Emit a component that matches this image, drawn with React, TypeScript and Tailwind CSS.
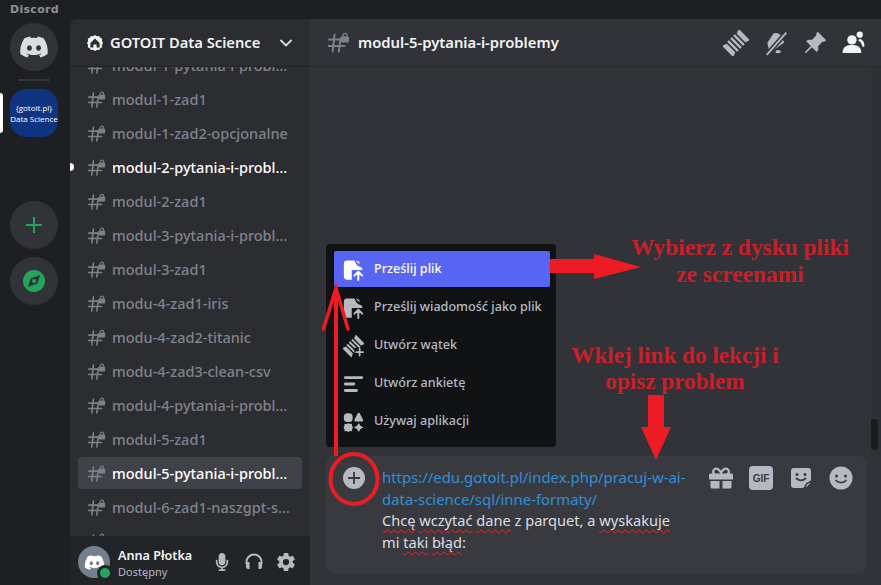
import { FaDiscord, FaGift, FaMicrophone } from "react-icons/fa";
import { IoSettingsSharp } from "react-icons/io5";
import { BsPinAngleFill } from "react-icons/bs";

const channels = [
    { name: "modul-1-pytania-i-problemy" },
    { name: "modul-1-zad1" },
    { name: "modul-1-zad2-opcjonalne" },
    { name: "modul-2-pytania-i-problemy", unread: true },
    { name: "modul-2-zad1" },
    { name: "modul-3-pytania-i-problemy" },
    { name: "modul-3-zad1" },
    { name: "modu-4-zad1-iris" },
    { name: "modu-4-zad2-titanic" },
    { name: "modu-4-zad3-clean-csv" },
    { name: "modul-4-pytania-i-problemy" },
    { name: "modul-5-zad1" },
    { name: "modul-5-pytania-i-problemy", active: true },
    { name: "modul-6-zad1-naszgpt-streamlit" },
    { name: "modul-6-zad2-pytania" },
];

const LockHash = ({ size = 22 }: { size?: number }) => (
    <svg width={size} height={size} viewBox="0 0 22 22" fill="none" className="shrink-0 text-[#7c8089]">
        <path
            d="M6.6 2.5 4.6 19.5M12.6 6.5 10.8 19.5M1 7.5h11M0.5 14h16"
            stroke="currentColor"
            strokeWidth="2"
            strokeLinecap="round"
        />
        <rect x="13" y="4.2" width="8" height="6.3" rx="1.2" fill="currentColor" />
        <path d="M15 4.6V3.4a2 2 0 0 1 4 0v1.2" stroke="currentColor" strokeWidth="1.4" />
    </svg>
);

const ThreadIcon = ({ plus, size = 24 }: { plus?: boolean; size?: number }) => (
    <svg width={size} height={size} viewBox="0 0 24 24" fill="currentColor">
        <g transform="rotate(45 12 12)">
            <path d="M4.5 1h15l-2 4.500h-11z" />
            <rect x="5.500" y="7" width="13" height="2.200" rx="0.500" />
            <rect x="5.500" y="10.900" width="13" height="2.200" rx="0.500" />
            <rect x="5.500" y="14.800" width="13" height="2.200" rx="0.500" />
            <path d="M6.500 18.500h11l2 4.500h-15z" />
        </g>
        {plus && (
            <>
                <rect x="13" y="14" width="11" height="10" fill="#111214" />
                <path d="M19 15v8M15 19h8" stroke="currentColor" strokeWidth="2" strokeLinecap="round" />
            </>
        )}
    </svg>
);

const UploadFileIcon = ({ bg }: { bg: string }) => (
    <svg width="24" height="24" viewBox="0 0 24 24" fill="currentColor">
        <path d="M4.5 1H13l9 9v9a4 4 0 0 1-4 4H4.5A3.5 3.5 0 0 1 1 19.5v-15A3.5 3.5 0 0 1 4.500 1z" />
        <path d="M14.500 1.500c.4 3.500 3 6 7 6.500" fill="none" stroke={bg} strokeWidth="1.600" />
        <path d="M15.500 1 22 1 22 7.500z" fill={bg} />
        <path d="M15 1.200c2.500.6 3.800 1.600 4.600 3.600-1.800-.3-3.800-1.400-4.600-3.600zM17 6.200l4.600 2.600" fill="currentColor" />
        <rect x="10" y="12" width="14" height="12" fill={bg} />
        <path
            d="M17.500 23.500v-9M13 18.500l4.500-4.500 4.500 4.500"
            fill="none"
            stroke="currentColor"
            strokeWidth="2.200"
            strokeLinecap="round"
            strokeLinejoin="round"
        />
    </svg>
);

const PollIcon = () => (
    <svg width="24" height="24" viewBox="0 0 24 24" fill="currentColor">
        <rect x="1" y="3" width="22" height="3.400" rx="1.700" />
        <rect x="1" y="10.400" width="13" height="3.400" rx="1.700" />
        <rect x="1" y="17.800" width="16" height="3.400" rx="1.700" />
    </svg>
);

const AppsIcon = () => (
    <svg width="24" height="24" viewBox="0 0 24 24" fill="currentColor">
        <rect x="1" y="2" width="10" height="10" rx="4" />
        <path d="M18 1.500c.6 0 1 .3 1.300.8l3.600 7c.5 1-.2 2.200-1.400 2.200h-7c-1.200 0-1.900-1.200-1.400-2.200l3.600-7c.3-.5.7-.8 1.300-.8z" />
        <path d="M6 13.300l2 1 2.200-.2.2 2.200 1 2-1 2-.2 2.200-2.200-.2-2 1-2-1-2.200.2-.2-2.200-1-2 1-2 .2-2.200 2.200.2z" />
        <path d="M18 13l2 3.300 3.500 1.900-3.500 1.900-2 3.400-2-3.400-3.500-1.900 3.500-1.900z" />
    </svg>
);

const MenuRow = ({ label, icon, active }: { label: string; icon: React.ReactNode; active?: boolean }) => (
    <div
        className={`flex h-9 items-center gap-[10px] whitespace-nowrap rounded-[2px] px-[9px] pt-[1px] text-[12.6px] font-medium ${
            active ? "bg-[#5865f2] text-white" : "text-[#b5bac1]"
        }`}
    >
        <span className="flex w-[21px] justify-center">{icon}</span>
        {label}
    </div>
);

const Squiggle = ({ children }: { children: React.ReactNode }) => (
    <span className="underline decoration-[#e8262d] decoration-wavy decoration-[1px] underline-offset-[3px] [text-decoration-skip-ink:none]">
        {children}
    </span>
);

const Annotations = () => (
    <svg width="881" height="585" viewBox="0 0 881 585" fill="none" className="pointer-events-none absolute left-0 top-0">
        <path d="M336 456V288" stroke="#ed1c24" strokeWidth="4" />
        <path d="M323.5 329 336 288l12 41" stroke="#ed1c24" strokeWidth="3.500" strokeLinecap="round" />
        <ellipse cx="354" cy="479" rx="23.500" ry="25" stroke="#ed1c24" strokeWidth="4" />
        <path d="M550 259h44v-5l47 13-47 12v-6h-44z" fill="#ed1c24" />
        <path d="M648 395h16v32h7l-15 33-15-33h7z" fill="#ed1c24" />
    </svg>
);

const App = () => {
    return (
        <div className="relative flex h-[585px] w-[881px] flex-col overflow-hidden bg-[#1e1f22] font-['Noto_Sans',sans-serif]">
            <div className="flex h-[19px] shrink-0 items-center pl-[10px] font-['DejaVu_Sans',sans-serif] text-[11px] font-bold leading-none tracking-[0.3px] text-[#8e9299]">
                Discord
            </div>
            <div className="flex min-h-0 flex-1">
                {/* serwery */}
                <div className="flex w-[70px] shrink-0 flex-col items-start pl-[10px] pt-1">
                    <div className="flex size-12 items-center justify-center rounded-full bg-[#313338] text-[#dbdee1]">
                        <FaDiscord size={30} />
                    </div>
                    <div className="ml-2 mt-2 h-[2px] w-8 rounded-sm bg-[#35363c]" />
                    <div className="relative mt-2 h-12">
                        <div className="absolute -left-[10px] top-1 h-10 w-[3px] rounded-r bg-white" />
                        <div className="flex size-12 flex-col items-center justify-center rounded-2xl bg-[#0f3480] text-center font-['Open_Sans',sans-serif] text-[8px] leading-[11px] text-white">
                            <span>{"{gotoit.pl}"}</span>
                            <span>Data Science</span>
                        </div>
                    </div>
                    <div className="mt-16 flex size-12 items-center justify-center rounded-full bg-[#313338] text-[#23a559]">
                        <svg width="18" height="18" viewBox="0 0 18 18" fill="none">
                            <path d="M9 1v16M1 9h16" stroke="currentColor" strokeWidth="2" />
                        </svg>
                    </div>
                    <div className="mt-2 flex size-12 items-center justify-center rounded-full bg-[#313338]">
                        <svg width="24" height="24" viewBox="0 0 24 24">
                            <circle cx="12" cy="12" r="11" fill="#23a559" />
                            <path d="M18 6 15.500 14.500 6 18 8.500 9.500z" fill="#313338" />
                            <circle cx="12" cy="12" r="2" fill="#23a559" />
                        </svg>
                    </div>
                </div>

                {/* kanały */}
                <div className="flex w-[240px] shrink-0 flex-col overflow-hidden rounded-tl-lg bg-[#2b2d31]">
                    <div className="z-10 flex h-12 shrink-0 items-center border-b border-[#232428] bg-[#2b2d31] px-[17px]">
                        <svg width="16" height="16" viewBox="0 0 16 16" className="mr-[7px] shrink-0">
                            <path
                                d="M8 0l1.900 1.200 2.200-.3 1.100 1.900 2 1-.3 2.200L16 8l-1.100 2 .3 2.200-2 1-1.100 1.900-2.200-.3L8 16l-1.900-1.200-2.200.3-1.100-1.900-2-1 .3-2.200L0 8l1.100-2-.3-2.200 2-1L3.900.9l2.200.3z"
                                fill="#f2f3f5"
                            />
                            <path d="M8 3.600 3.400 8v4.400h3V9.500h3.200v2.900h3V8z" fill="#2b2d31" />
                        </svg>
                        <span className="flex-1 truncate text-[14.7px] font-semibold text-[#f2f3f5]">GOTOIT Data Science</span>
                        <svg width="14" height="14" viewBox="0 0 14 14" fill="none">
                            <path d="M2 4.500 7 9.500l5-5" stroke="#dbdee1" strokeWidth="1.800" strokeLinecap="round" />
                        </svg>
                    </div>
                    <div className="relative min-h-0 flex-1 overflow-hidden">
                        <div className="-mt-[18px] flex flex-col gap-[2px] px-2">
                            {channels.map((item) => (
                                <div
                                    key={item.name}
                                    className={`relative flex h-8 shrink-0 items-center gap-[6px] rounded pl-[10px] pr-2 pt-[2px] ${
                                        item.active ? "bg-[#404249]" : ""
                                    }`}
                                >
                                    {item.unread && <div className="absolute -left-2 top-3 h-2 w-1 rounded-r bg-white" />}
                                    <LockHash size={18} />
                                    <span
                                        className={`truncate text-[14.5px] font-medium ${
                                            item.active || item.unread ? "text-white" : "text-[#80848e]"
                                        }`}
                                    >
                                        {item.name}
                                    </span>
                                </div>
                            ))}
                        </div>
                    </div>
                    <div className="flex h-[49px] shrink-0 items-center bg-[#232428] pl-2 pr-[14px] pt-[3px]">
                        <div className="relative flex size-8 shrink-0 items-center justify-center rounded-full bg-[#747f8d] text-white">
                            <FaDiscord size={21} />
                            <div className="absolute -bottom-[3px] -right-[3px] size-[16px] rounded-full border-[3px] border-[#232428] bg-[#23a559]" />
                        </div>
                        <div className="ml-2 mt-[3px] flex-1">
                            <div className="text-[12.6px] font-semibold leading-[16px] text-[#f2f3f5]">Anna Płotka</div>
                            <div className="text-[11px] leading-[15px] text-[#b5bac1]">Dostępny</div>
                        </div>
                        <div className="flex items-center gap-[12px] text-[#b5bac1]">
                            <FaMicrophone size={18} className="w-5" />
                            <svg width="20" height="20" viewBox="0 0 20 20" fill="none">
                                <path d="M2.500 12V10a7.500 7.500 0 0 1 15 0v2" stroke="currentColor" strokeWidth="2" />
                                <path d="M2 12a2 2 0 0 1 2-2h1.500v7H4a2 2 0 0 1-2-2zM18 12a2 2 0 0 0-2-2h-1.500v7H16a2 2 0 0 0 2-2z" fill="currentColor" />
                            </svg>
                            <IoSettingsSharp size={20} />
                        </div>
                    </div>
                </div>

                {/* czat */}
                <div className="relative flex min-w-0 flex-1 flex-col bg-[#313338]">
                    <div className="flex h-12 shrink-0 items-center border-b border-[#2a2c30] pl-[18px] pr-[15px] text-[#b5bac1]">
                        <LockHash />
                        <span className="ml-[8px] flex-1 text-[14.8px] font-semibold text-[#f2f3f5]">modul-5-pytania-i-problemy</span>
                        <div className="flex items-center gap-[14px]">
                            <ThreadIcon size={26} />
                            <svg width="26" height="26" viewBox="0 0 24 24" fill="currentColor">
                                <path d="M9 3.500c2.800-1.500 6-.5 7.500 2l3 5.500-12 10-1.500-2-2-6.500z" transform="rotate(4 12 12)" />
                                <ellipse cx="14" cy="20" rx="2.500" ry="1.500" />
                                <path d="M3.500 23 21.500 2.500" stroke="#313338" strokeWidth="4.500" />
                                <path d="M3.500 23 21.500 2.500" stroke="currentColor" strokeWidth="1.700" />
                            </svg>
                            <BsPinAngleFill size={24} className="-scale-x-100 rotate-90" />
                            <svg width="25" height="25" viewBox="0 0 24 24" className="text-[#f2f3f5]" fill="currentColor">
                                <circle cx="10.500" cy="9.500" r="4.500" />
                                <circle cx="18" cy="4.500" r="3" />
                                <path d="M1.500 22c0-5 3-7.500 9-7.500s9 2.500 9 7.500z" />
                                <path d="M18 8.500c3 1 4.500 3.500 4.500 6.500 0 1-1 1.500-2 1-.5-3-2-5-4-6z" />
                            </svg>
                        </div>
                    </div>

                    <div className="relative min-h-0 flex-1">
                        <div className="absolute bottom-[1px] right-0 top-0 w-[10px] bg-[#2e3035]" />
                        <div className="absolute right-[3px] top-[352px] h-[31px] w-[7px] rounded bg-[#1a1b1e]" />
                    </div>

                    <div className="mb-3 ml-4 mr-[14px] flex h-[117px] shrink-0 rounded-lg bg-[#383a40] pl-[17px] pr-[14px] pt-[10px]">
                        <div className="mr-[17px] mt-[1px] flex size-[22px] shrink-0 items-center justify-center rounded-full bg-[#b5bac1] text-[#383a40]">
                            <svg width="14" height="14" viewBox="0 0 14 14" fill="none">
                                <path d="M7 1v12M1 7h12" stroke="currentColor" strokeWidth="1.800" />
                            </svg>
                        </div>
                        <div className="w-[315px] text-[14.6px] leading-[22px] text-[#dbdee1]">
                            <div className="text-[14.9px] text-[#3090d8]">https://edu.gotoit.pl/index.php/pracuj-w-ai-</div>
                            <div className="text-[14.9px] text-[#3090d8]">data-science/sql/inne-formaty/</div>
                            <div className="-mt-[1px]">
                                <Squiggle>Chcę</Squiggle> <Squiggle>wczytać</Squiggle> <Squiggle>dane</Squiggle> z parquet, a{" "}
                                <Squiggle>wyskakuje</Squiggle>
                            </div>
                            <div>
                                mi <Squiggle>taki</Squiggle> <Squiggle>błąd</Squiggle>:
                            </div>
                        </div>
                        <div className="ml-auto flex h-[24px] items-start gap-[16px] text-[#b5bac1]">
                            <FaGift size={24} />
                            <div className="flex size-6 items-center justify-center rounded bg-[#b5bac1] font-['Liberation_Sans',sans-serif] text-[10px] font-bold text-[#383a40]">
                                GIF
                            </div>
                            <svg width="24" height="24" viewBox="0 0 24 24" fill="currentColor">
                                <path d="M5 2h14a3 3 0 0 1 3 3v9l-8 8H5a3 3 0 0 1-3-3V5a3 3 0 0 1 3-3z" />
                                <path d="M22 15.500 15.500 22c-.5-3.500 3-7 6.500-6.500z" fill="#383a40" />
                                <path d="M21.500 17 17 21.500c0-2.500 2-4.500 4.500-4.500z" fill="#b5bac1" />
                                <circle cx="8" cy="8.500" r="1.500" fill="#383a40" />
                                <circle cx="16" cy="8.500" r="1.500" fill="#383a40" />
                                <path d="M7.500 12.500c2.500 2.500 6.500 2.500 9 0" fill="none" stroke="#383a40" strokeWidth="1.800" strokeLinecap="round" />
                            </svg>
                            <svg width="24" height="24" viewBox="0 0 24 24" fill="currentColor">
                                <circle cx="12" cy="12" r="11.500" />
                                <circle cx="7.500" cy="10" r="1.500" fill="#383a40" />
                                <circle cx="16.500" cy="10" r="1.500" fill="#383a40" />
                                <path d="M7 14.500c2.500 2.800 7.500 2.800 10 0" fill="none" stroke="#383a40" strokeWidth="1.800" strokeLinecap="round" />
                            </svg>
                        </div>
                    </div>

                    {/* menu plusa */}
                    <div className="absolute left-4 top-[225px] flex h-[203px] w-[230px] flex-col gap-[2px] rounded bg-[#111214] pb-2 pl-2 pr-[6px] pt-[7px]">
                        <MenuRow label="Prześlij plik" active icon={<UploadFileIcon bg="#5865f2" />} />
                        <MenuRow label="Prześlij wiadomość jako plik" icon={<UploadFileIcon bg="#111214" />} />
                        <MenuRow label="Utwórz wątek" icon={<ThreadIcon plus />} />
                        <MenuRow label="Utwórz ankietę" icon={<PollIcon />} />
                        <MenuRow label="Używaj aplikacji" icon={<AppsIcon />} />
                    </div>
                </div>
            </div>

            <Annotations />
            <div className="absolute left-[610px] top-[234px] w-[260px] text-center font-['Liberation_Serif',serif] text-[23.4px] font-bold leading-[27px] text-[#c8202a]">
                <div>Wybierz z dysku pliki</div>
                <div>ze screenami</div>
            </div>
            <div className="absolute left-[545px] top-[342px] w-[260px] text-center font-['Liberation_Serif',serif] text-[23.2px] font-bold leading-[26px] text-[#c8202a]">
                <div>Wklej link do lekcji i</div>
                <div>opisz problem</div>
            </div>
        </div>
    );
};

export default App;
